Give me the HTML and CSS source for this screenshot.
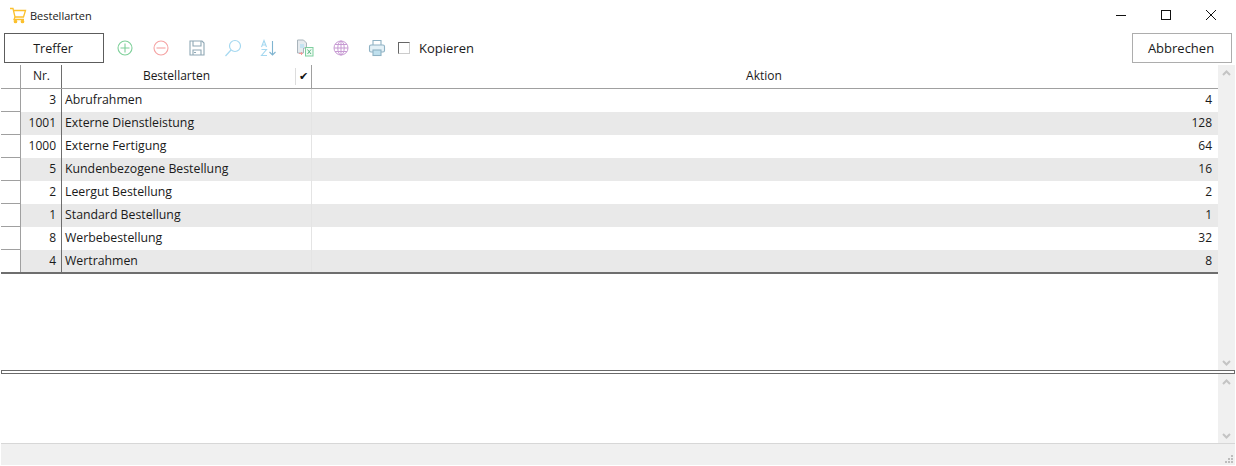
FILE: index.html
```html
<!DOCTYPE html>
<html lang="de">

<head>
    <title>Bestellarten</title>
    <link rel="stylesheet" href="styles.css">
</head>

<body>
    <!--Title bar-->
    <div class="titlebar">
        <svg class="cart" width="18" height="18" viewBox="0 0 18 18" fill="none" stroke="#fbc02d" stroke-width="1.3">
            <path d="M1 2.500h3l2 8.500h8.500l2-6.500H4.800" />
            <path d="M6 11l-1 2.500h10" />
            <circle cx="6.500" cy="15.500" r="1.200" fill="#fbc02d" />
            <circle cx="13.500" cy="15.500" r="1.200" fill="#fbc02d" />
        </svg>
        <span class="title">Bestellarten</span>
        <div class="winbtns">
            <svg width="12" height="12" viewBox="0 0 12 12" stroke="#111" fill="none"><path d="M1 6.500h10" /></svg>
            <svg width="12" height="12" viewBox="0 0 12 12" stroke="#111" fill="none"><rect x="1.500" y="1.500" width="9" height="9" /></svg>
            <svg width="12" height="12" viewBox="0 0 12 12" stroke="#111" fill="none"><path d="M1 1l10 10M11 1L1 11" /></svg>
        </div>
    </div>

    <!--Toolbar-->
    <div class="toolbar">
        <button class="btn btn-dark">Treffer</button>
        <div class="tools">
            <svg width="18" height="18" viewBox="0 0 18 18" fill="none" stroke="#7fd09a" stroke-width="1.1">
                <circle cx="9" cy="9" r="7" /><path d="M9 4.500v9M4.500 9h9" />
            </svg>
            <svg width="18" height="18" viewBox="0 0 18 18" fill="none" stroke="#f5a3a3" stroke-width="1.1">
                <circle cx="9" cy="9" r="7" /><path d="M4.500 9h9" />
            </svg>
            <svg width="18" height="18" viewBox="0 0 18 18" fill="none" stroke="#8fa8b5" stroke-width="1.1">
                <path d="M2 2h12l2 2v12H2z" /><path d="M5 2v5h8V2M5 16v-5h8v5" /><path d="M6 13.500h2" />
            </svg>
            <svg width="18" height="18" viewBox="0 0 18 18" fill="none" stroke="#a5d8f0" stroke-width="1.200">
                <circle cx="11" cy="7" r="5.500" /><path d="M7 11l-5.500 6" />
            </svg>
            <svg class="sort" width="18" height="18" viewBox="0 0 18 18" fill="none" stroke="#7fb4d0" stroke-width="1.100">
                <path stroke="#a5d8f0" d="M1.500 8L4 1.500 6.500 8M2.500 6h3M1.500 10.500h5l-5 6h5.500" />
                <path d="M12.500 2v14M9.500 13l3 3 3-3" />
            </svg>
            <svg width="18" height="18" viewBox="0 0 18 18" fill="none" stroke="#a9b4bb" stroke-width="1">
                <path d="M1.500 1h6l3 3v5h-3v5h-6z" fill="#e6ebef" />
                <rect x="4" y="5" width="4" height="4" fill="#c5e3f2" stroke="none" />
                <rect x="9.500" y="8.500" width="7.500" height="8.500" stroke="#7fcf9f" fill="#eefaf2" />
                <path d="M11.500 10.500l3.500 4.500M15 10.500l-3.500 4.500" stroke="#5cb885" />
                <path d="M3 14.500h3.500M5 13l1.500 1.500L5 16" stroke="#f19a9a" />
            </svg>
            <svg width="18" height="18" viewBox="0 0 18 18" fill="none" stroke="#c79ad3" stroke-width="1">
                <circle cx="9" cy="9" r="7" /><ellipse cx="9" cy="9" rx="3.200" ry="7" />
                <path d="M9 2v14M2 9h14M3 5.500h12M3 12.500h12" />
            </svg>
            <svg width="18" height="18" viewBox="0 0 18 18" fill="none" stroke="#8fb2c4" stroke-width="1.100">
                <path d="M5 6V1.500h8V6" /><rect x="1.500" y="6" width="15" height="7" rx="1.500" fill="#e4f1f7" />
                <rect x="5" y="11" width="8" height="5.500" fill="#bfe0ee" />
            </svg>
        </div>
        <span class="check-box"></span>
        <span class="check-label">Kopieren</span>
        <button class="btn btn-light">Abbrechen</button>
    </div>

    <!--Upper table with scrollbar-->
    <div class="upper">
        <div class="grid">
            <div class="row head">
                <div class="c0"></div>
                <div class="c1">Nr.</div>
                <div class="c2">Bestellarten<span class="tick">✔</span></div>
                <div class="c3">Aktion</div>
            </div>
            <div class="row">
                <div class="c0"></div><div class="c1">3</div><div class="c2">Abrufrahmen</div><div class="c3">4</div>
            </div>
            <div class="row alt">
                <div class="c0"></div><div class="c1">1001</div><div class="c2">Externe Dienstleistung</div><div class="c3">128</div>
            </div>
            <div class="row">
                <div class="c0"></div><div class="c1">1000</div><div class="c2">Externe Fertigung</div><div class="c3">64</div>
            </div>
            <div class="row alt">
                <div class="c0"></div><div class="c1">5</div><div class="c2">Kundenbezogene Bestellung</div><div class="c3">16</div>
            </div>
            <div class="row">
                <div class="c0"></div><div class="c1">2</div><div class="c2">Leergut Bestellung</div><div class="c3">2</div>
            </div>
            <div class="row alt">
                <div class="c0"></div><div class="c1">1</div><div class="c2">Standard Bestellung</div><div class="c3">1</div>
            </div>
            <div class="row">
                <div class="c0"></div><div class="c1">8</div><div class="c2">Werbebestellung</div><div class="c3">32</div>
            </div>
            <div class="row alt last">
                <div class="c0"></div><div class="c1">4</div><div class="c2">Wertrahmen</div><div class="c3">8</div>
            </div>
        </div>
        <div class="scrollbar">
            <svg width="9" height="6" viewBox="0 0 9 6" fill="none" stroke="#c4c4c4" stroke-width="2"><path d="M1 5l3.500-3.500L8 5" /></svg>
            <svg width="9" height="6" viewBox="0 0 9 6" fill="none" stroke="#c4c4c4" stroke-width="2"><path d="M1 1l3.500 3.500L8 1" /></svg>
        </div>
    </div>

    <div class="splitter"></div>

    <!--Lower pane-->
    <div class="lower">
        <div class="scrollbar">
            <svg width="9" height="6" viewBox="0 0 9 6" fill="none" stroke="#c4c4c4" stroke-width="2"><path d="M1 5l3.500-3.500L8 5" /></svg>
            <svg width="9" height="6" viewBox="0 0 9 6" fill="none" stroke="#c4c4c4" stroke-width="2"><path d="M1 1l3.500 3.500L8 1" /></svg>
        </div>
    </div>

    <!--Status bar-->
    <div class="statusbar">
        <svg width="10" height="10" viewBox="0 0 10 10" fill="#bdbdbd">
            <rect x="7" y="0" width="2" height="2" /><rect x="4" y="3" width="2" height="2" /><rect x="7" y="3" width="2" height="2" />
            <rect x="1" y="6" width="2" height="2" /><rect x="4" y="6" width="2" height="2" /><rect x="7" y="6" width="2" height="2" />
        </svg>
    </div>
</body>

</html>
```

FILE: styles.css
```css
/*global styling*/
* {
    box-sizing: border-box;
    font-family: "Open Sans", "Noto Sans", sans-serif;
}

body {
    width: 1235px;
    margin: 0;
    padding: 0;
    background-color: white;
    color: #1a1a1a;
    font-size: 12px;
    overflow: hidden;
}

/*title bar*/
.titlebar {
    display: flex;
    align-items: center;
    height: 33px;
    padding-left: 9px;
    padding-bottom: 3px;
}

.title {
    margin-left: 3px;
    font-size: 11px;
}

.winbtns {
    display: flex;
    gap: 33px;
    margin-left: auto;
    margin-right: 18px;
}

/*toolbar*/
.toolbar {
    display: flex;
    align-items: center;
    height: 30px;
    padding: 0 3px 0 4px;
}

.btn {
    width: 100px;
    height: 30px;
    background-color: white;
    font-size: 13px;
    color: #1a1a1a;
    padding: 0 2px 0 0;
}

.btn-dark {
    border: 1px solid #5c5c5c;
    font-size: 12.500px;
}

.btn-light {
    border: 1px solid #adadad;
    margin-left: auto;
}

.tools {
    display: flex;
    gap: 18px;
    margin-left: 12px;
}

.check-box {
    width: 12px;
    height: 12px;
    margin-left: 12px;
    border: 1px solid #666;
    border-right-color: #ccc;
    border-bottom-color: #ccc;
}

.check-label {
    margin-left: 9px;
    font-size: 13px;
}

/*upper table*/
.upper {
    display: flex;
    height: 305px;
    margin-top: 2px;
}

.grid {
    flex: 1;
    padding-left: 1px;
}

.row {
    display: flex;
    height: 23px;
    line-height: 22px;
}

.alt {
    background-color: #e9e9e9;
}

.last {
    border-bottom: 2px solid #6e6e6e;
    height: 24px;
}

.head {
    height: 24px;
    border-bottom: 1px solid #a0a0a0;
    background-color: white;
}

.c0 {
    width: 20px;
    background-color: white;
    border-bottom: 1px solid #a0a0a0;
    border-right: 1px solid #a0a0a0;
}

.head .c0 {
    border-bottom: 0;
}

.last .c0 {
    border-bottom: 0;
}

.c1 {
    width: 41px;
    padding-right: 5px;
    text-align: right;
    border-right: 1px solid #6e6e6e;
}

.c2 {
    width: 250px;
    padding-left: 3px;
    font-size: 12.300px;
    border-right: 1px solid #e4e4e4;
}

.c3 {
    flex: 1;
    padding-right: 6px;
    text-align: right;
}

.head .c1 {
    padding-right: 11px;
    border-right-color: #6e6e6e;
}

.head .c2 {
    position: relative;
    padding-left: 0;
    padding-right: 20px;
    font-size: 12px;
    text-align: center;
    border-right: 1px solid #a0a0a0;
}

.head .c3 {
    padding-right: 2px;
    text-align: center;
}

.tick {
    position: absolute;
    top: 3px;
    right: 0;
    width: 16px;
    height: 17px;
    line-height: 17px;
    border-left: 1px solid #ddd;
    text-align: center;
    font-family: "DejaVu Sans", sans-serif;
    font-size: 11px;
    color: #111;
}

/*scrollbars*/
.scrollbar {
    display: flex;
    flex-direction: column;
    justify-content: space-between;
    align-items: center;
    width: 17px;
    padding: 5px 0 4px;
    background-color: #f0f0f0;
}

/*splitter*/
.splitter {
    height: 4px;
    margin-left: 1px;
    border: 1px solid #6a6a6a;
    background-color: white;
}

/*lower pane*/
.lower {
    display: flex;
    justify-content: flex-end;
    height: 69px;
}

/*status bar*/
.statusbar {
    display: flex;
    justify-content: flex-end;
    align-items: flex-end;
    height: 22px;
    margin-left: 1px;
    padding: 0 1px 0 0;
    border-top: 1px solid #d7d7d7;
    background-color: #f0f0f0;
}
```
